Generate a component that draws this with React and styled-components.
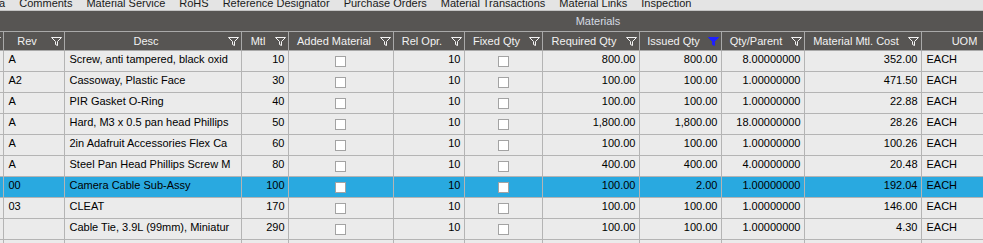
import React from 'react'
import styled, { createGlobalStyle } from 'styled-components'

const GlobalStyle = createGlobalStyle`
  html, body {
    margin: 0;
    padding: 0;
    background: #ebebeb;
    overflow: hidden;
  }
  body {
    font-family: "Liberation Sans", Arial, sans-serif;
    font-size: 11px;
    color: #000;
  }
`

const tabs = [
  'Data', 'Comments', 'Material Service', 'RoHS', 'Reference Designator',
  'Purchase Orders', 'Material Transactions', 'Material Links', 'Inspection',
]

const columns = [
  { key: 'x', label: '', w: 3 },
  { key: 'rev', label: 'Rev', w: 61, align: 'left' },
  { key: 'desc', label: 'Desc', w: 177, align: 'left' },
  { key: 'mtl', label: 'Mtl', w: 47, align: 'right' },
  { key: 'added', label: 'Added Material', w: 105, check: true },
  { key: 'rel', label: 'Rel Opr.', w: 71, align: 'right' },
  { key: 'fixed', label: 'Fixed Qty', w: 78, check: true },
  { key: 'req', label: 'Required Qty', w: 97, align: 'right' },
  { key: 'iss', label: 'Issued Qty', w: 82, align: 'right', active: true },
  { key: 'qpp', label: 'Qty/Parent', w: 83, align: 'right' },
  { key: 'cost', label: 'Material Mtl. Cost', w: 117, align: 'right' },
  { key: 'uom', label: 'UOM', w: 100, align: 'left' },
  { key: 'more', label: '', w: 175, noIcon: true },
]

const rows = [
  { rev: 'A', desc: 'Screw, anti tampered, black oxid', mtl: '10', rel: '10', req: '800.00', iss: '800.00', qpp: '8.00000000', cost: '352.00', uom: 'EACH' },
  { rev: 'A2', desc: 'Cassoway, Plastic Face', mtl: '30', rel: '10', req: '100.00', iss: '100.00', qpp: '1.00000000', cost: '471.50', uom: 'EACH' },
  { rev: 'A', desc: 'PIR Gasket O-Ring', mtl: '40', rel: '10', req: '100.00', iss: '100.00', qpp: '1.00000000', cost: '22.88', uom: 'EACH' },
  { rev: 'A', desc: 'Hard, M3 x 0.5 pan head Phillips', mtl: '50', rel: '10', req: '1,800.00', iss: '1,800.00', qpp: '18.00000000', cost: '28.26', uom: 'EACH' },
  { rev: 'A', desc: '2in Adafruit Accessories Flex Ca', mtl: '60', rel: '10', req: '100.00', iss: '100.00', qpp: '1.00000000', cost: '100.26', uom: 'EACH' },
  { rev: 'A', desc: 'Steel Pan Head Phillips Screw M', mtl: '80', rel: '10', req: '400.00', iss: '400.00', qpp: '4.00000000', cost: '20.48', uom: 'EACH' },
  { rev: '00', desc: 'Camera Cable Sub-Assy', mtl: '100', rel: '10', req: '100.00', iss: '2.00', qpp: '1.00000000', cost: '192.04', uom: 'EACH', selected: true },
  { rev: '03', desc: 'CLEAT', mtl: '170', rel: '10', req: '100.00', iss: '100.00', qpp: '1.00000000', cost: '146.00', uom: 'EACH' },
  { rev: '', desc: 'Cable Tie, 3.9L (99mm), Miniatur', mtl: '290', rel: '10', req: '100.00', iss: '100.00', qpp: '1.00000000', cost: '4.30', uom: 'EACH' },
  { rev: '', desc: '', mtl: '', rel: '', req: '', iss: '', qpp: '', cost: '', uom: '', blank: true },
]

const FilterIcon = ({ active }) => (
  <svg width="11" height="9" viewBox="0 0 11 9">
    <path
      d="M0.5 0.5 H10.5 L6.5 4.5 V8.5 L4.5 7.5 V4.5 Z"
      fill={active ? '#1f1fff' : 'none'}
      stroke={active ? '#1f1fff' : '#f4f4f4'}
      strokeWidth="1"
      strokeLinejoin="miter"
    />
  </svg>
)

export default function App() {
  return (
    <>
      <GlobalStyle />
      <TabBar>
        {tabs.map(t => <Tab key={t}>{t}</Tab>)}
      </TabBar>
      <Grid>
        <GroupBar>Materials</GroupBar>
        <Table>
          <colgroup>
            {columns.map(c => <Col key={c.key} $w={c.w} />)}
          </colgroup>
          <thead>
            <tr>
              {columns.map(c => (
                <Th key={c.key}>
                  <HeadInner>
                    <HeadLabel>{c.label}</HeadLabel>
                    {!c.noIcon && <FilterIcon active={c.active} />}
                  </HeadInner>
                </Th>
              ))}
            </tr>
          </thead>
          <tbody>
            {rows.map((r, i) => (
              <Row key={i} $selected={r.selected}>
                {columns.map(c => (
                  c.check ? (
                    <Td key={c.key} $check>
                      {!r.blank && <Check />}
                    </Td>
                  ) : (
                    <Td key={c.key} $align={c.align}>{r[c.key]}</Td>
                  )
                ))}
              </Row>
            ))}
          </tbody>
        </Table>
      </Grid>
    </>
  )
}

const TabBar = styled.div`
  display: flex;
  align-items: flex-end;
  gap: 14px;
  height: 10px;
  overflow: hidden;
  margin-left: -18px;
  border-bottom: 1px solid #c4c4c4;
  background: #e4e4e4;
  white-space: nowrap;
`

const Tab = styled.span`
  line-height: 13px;
  color: #1a1a1a;
  flex: none;
`

const Grid = styled.div`
  width: 1196px;
  background: #ebebeb;
`

const GroupBar = styled.div`
  height: 20px;
  line-height: 20px;
  background: #575553;
  color: #d6dae2;
  text-align: center;
`

const Table = styled.table`
  width: 100%;
  border-collapse: collapse;
  table-layout: fixed;
`

const Col = styled.col`
  width: ${({ $w }) => $w}px;
`

const Th = styled.th`
  height: 18px;
  padding: 0;
  background: #575553;
  border-top: 1px solid #a9a9a9;
  border-bottom: 1px solid #a9a9a9;
  border-right: 1px solid #a9a9a9;
  color: #f2f2f2;
  font-weight: normal;
  overflow: hidden;
  white-space: nowrap;
`

const HeadInner = styled.div`
  display: flex;
  align-items: center;
  justify-content: flex-end;
  height: 18px;
  padding-right: 2px;
  svg {
    flex: none;
  }
`

const HeadLabel = styled.span`
  flex: 1;
  text-align: center;
  overflow: hidden;
  padding-bottom: 1px;
`

const Row = styled.tr`
  background: ${({ $selected }) => ($selected ? '#29a9e0' : '#ebebeb')};
`

const Td = styled.td`
  height: 17px;
  padding: ${({ $check }) => ($check ? '0' : '0 3px 3px 5px')};
  border-bottom: 1px solid #b4b4b4;
  border-right: 1px solid #b4b4b4;
  text-align: ${({ $align, $check }) => ($check ? 'center' : $align || 'left')};
  vertical-align: middle;
  white-space: nowrap;
  overflow: hidden;
  text-overflow: clip;
  line-height: 13px;
`

const Check = styled.span`
  display: inline-block;
  width: 9px;
  height: 9px;
  background: #fff;
  border: 1px solid #a3a3a3;
  vertical-align: middle;
`
